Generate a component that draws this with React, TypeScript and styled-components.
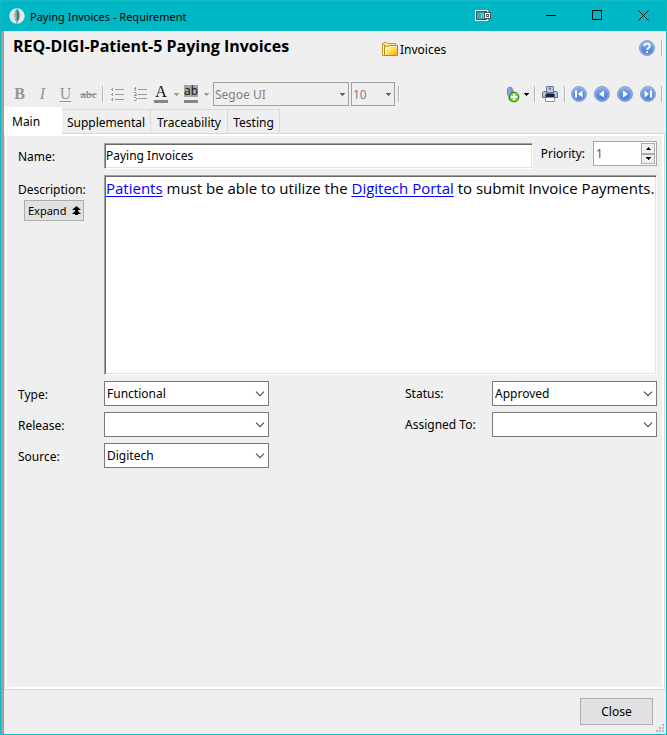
import React from "react";
import styled, { createGlobalStyle, css } from "styled-components";

const GlobalStyle = createGlobalStyle`
  *, *::before, *::after { box-sizing: border-box; }
  body { margin: 0; background: #efefef; }
  body, button, input, select { font-family: "Noto Sans", "Open Sans", sans-serif; font-size: 12px; color: #000; }
  button { padding: 0; }
`;

const Window = styled.div`
  min-height: 100vh;
  display: flex;
  flex-direction: column;
  border: 1px solid #12bac6;
  background: #efefef;
`;

const TitleBar = styled.header`
  height: 30px;
  padding: 0 0 0 8px;
  display: flex;
  align-items: center;
  background: #00b7c5;
`;

const WindowTitle = styled.span`
  flex: 1;
  padding-left: 5px;
  font-size: 11px;
  white-space: nowrap;
`;

const CaptionButton = styled.button<{ $wide?: boolean }>`
  width: ${(p) => (p.$wide ? 53 : 46)}px;
  height: 28px;
  margin-bottom: 2px;
  border: 0;
  background: none;
  display: flex;
  align-items: center;
  justify-content: ${(p) => (p.$wide ? "flex-start" : "center")};
`;

const Client = styled.div`
  flex: 1;
  display: flex;
  flex-direction: column;
  border-left: 3px solid #a09d9d;
  padding-right: 1px;
`;

const Heading = styled.div`
  height: 51px;
  padding: 4px 0 0 9px;
  display: grid;
  grid-template-columns: 369px 1fr auto;
  align-items: start;
`;

const Title = styled.h1`
  margin: 0;
  font-family: "Open Sans", sans-serif;
  font-size: 16px;
  line-height: 22px;
  font-weight: 700;
  white-space: nowrap;
`;

const FolderLink = styled.button`
  border: 0;
  background: none;
  height: 28px;
  display: flex;
  align-items: center;
  gap: 2px;
`;

const HelpArea = styled.div`
  display: flex;
  align-items: center;
  gap: 6px;
  height: 26px;
  padding-right: 2px;
`;

const Toolbar = styled.div`
  height: 24px;
  display: flex;
  align-items: center;
  justify-content: space-between;
  padding: 0 0 0 4px;
`;

const Group = styled.div`
  display: flex;
  align-items: center;
`;

const IconButton = styled.button<{ $w?: number }>`
  width: ${(p) => p.$w ?? 23}px;
  height: 24px;
  flex: none;
  border: 0;
  background: none;
  display: flex;
  align-items: center;
  justify-content: center;
`;

const Separator = styled.span<{ $gap?: number }>`
  width: 2px;
  height: 16px;
  margin: 0 ${(p) => p.$gap ?? 0}px;
  border-left: 1px solid #b4b4b4;
  border-right: 1px solid #fafafa;
`;

const Letter = styled.span<{ $kind: "b" | "i" | "u" | "s" }>`
  font-family: "Liberation Serif", serif;
  font-size: 16px;
  line-height: 18px;
  color: #959595;
  ${(p) => p.$kind === "b" && css`font-weight: 700;`}
  ${(p) => p.$kind === "i" && css`font-style: italic;`}
  ${(p) => p.$kind === "u" && css`text-decoration: underline; text-underline-offset: 2px;`}
  ${(p) => p.$kind === "s" && css`font-size: 11px; font-weight: 700; text-decoration: line-through;`}
`;

const Swatch = styled.span<{ $highlight?: boolean }>`
  width: 14px;
  height: 18px;
  border-bottom: 3px solid #858585;
  font: ${(p) => (p.$highlight ? '12px/12px "Open Sans", sans-serif' : '16px/14px "Liberation Serif", serif')};
  text-align: center;
  display: block;
  color: #111;
  background: ${(p) => (p.$highlight ? "linear-gradient(#a5a5a5 12px, #efefef 12px)" : "none")};
`;

const SelectFrame = styled.div<{ $tool?: boolean; $w?: number }>`
  display: grid;
  grid-template-columns: 1fr;
  align-items: center;
  width: ${(p) => (p.$w ? `${p.$w}px` : "100%")};
  height: ${(p) => (p.$tool ? 24 : 25)}px;
  border: 1px solid ${(p) => (p.$tool ? "#a0a0a0" : "#7a7a7a")};
  background: ${(p) => (p.$tool ? "#efefef" : "#fff")};
  > * { grid-area: 1 / 1; }
  > svg { justify-self: end; margin-right: 3px; pointer-events: none; }
  & + & { margin-left: 2px; }
`;

const Select = styled.select`
  appearance: none;
  width: 100%;
  height: 100%;
  border: 0;
  padding: 0 18px 0 2px;
  background: transparent;
  opacity: 1;
  &:disabled { color: #808080; opacity: 1; padding-left: 1px; }
`;

const Tabs = styled.div`
  display: flex;
  align-items: flex-end;
  height: 27px;
  padding-top: 1px;
`;

const Tab = styled.button<{ $active?: boolean; $w: number }>`
  flex: none;
  width: ${(p) => p.$w}px;
  height: 24px;
  border: solid #dadada;
  border-width: 1px 1px 0 0;
  padding-top: 2px;
  background: #efefef;
  white-space: nowrap;
  ${(p) => p.$active && css`
    position: relative;
    border-color: #fff;
    margin-bottom: -2px;
    height: 28px;
    padding: 0 0 1px 8px;
    background: #fff;
    text-align: left;
  `}
`;

const TabPage = styled.main`
  flex: 1;
  border: 1px solid #dadada;
  box-shadow: inset 0 0 0 2px #fff;
  padding: 6px 7px 8px 13px;
`;

const TopRow = styled.div`
  display: grid;
  grid-template-columns: 86px 1fr auto 64px;
  align-items: center;
  height: 32px;
`;

const Label = styled.label`
  font-size: 12px;
  line-height: 16px;
  padding-top: 2px;
  white-space: nowrap;
`;

const PriorityLabel = styled(Label)`
  padding: 0 8px 5px 8px;
`;

const inset = css`
  border: 1px solid;
  border-color: #a0a0a0 #fff #fff #a0a0a0;
  box-shadow: inset 1px 1px #696969, inset -1px -1px #e3e3e3;
  background: #fff;
`;

const NameInput = styled.input`
  ${inset}
  width: 100%;
  height: 26px;
  border-radius: 0;
  padding: 0 1px 2px;
  outline: 0;
`;

const Spinner = styled.div`
  display: flex;
  height: 25px;
  margin-bottom: 5px;
  border: 1px solid #a8a8a8;
  background: #fff;
  padding: 1px;
`;

const SpinInput = styled.input`
  flex: 1;
  min-width: 0;
  border: 0;
  padding: 0 1px;
  outline: 0;
  color: #9a4400;
`;

const SpinButtons = styled.div`
  width: 14px;
  display: grid;
  grid-template-rows: 1fr 1fr;
`;

const SpinButton = styled.button`
  border: 1px solid #ababab;
  background: #f0f0f0;
  display: flex;
  align-items: center;
  justify-content: center;
`;

const DescriptionRow = styled.div`
  display: grid;
  grid-template-columns: 86px 1fr;
  margin-top: 3px;
`;

const DescriptionSide = styled.div`
  display: flex;
  flex-direction: column;
  align-items: flex-start;
  gap: 2px;
  padding-top: 5px;
`;

const ExpandButton = styled.button`
  width: 60px;
  height: 21px;
  margin-left: 6px;
  border: 1px solid #adadad;
  background: #e1e1e1;
  display: flex;
  align-items: center;
  justify-content: space-between;
  padding: 0 2px 0 3px;
  font-size: 11px;
`;

const Description = styled.div`
  ${inset}
  height: 200px;
  padding: 1px 0 1px 1px;
  font-family: "Open Sans", sans-serif;
  font-size: 15px;
  line-height: 22px;
  outline: 0;
`;

const TextLink = styled.a`
  color: #00f;
  text-decoration: underline;
  text-underline-offset: 2px;
`;

const Fields = styled.div`
  display: grid;
  grid-template-columns: 86px minmax(100px, 165px) minmax(20px, 1fr) 87px minmax(100px, 165px);
  row-gap: 6px;
  align-items: center;
  margin-top: 6px;
`;

const RightLabel = styled(Label)`
  grid-column: 4;
  padding-top: 0;
`;

const Footer = styled.footer`
  height: 44px;
  display: flex;
  justify-content: flex-end;
  align-items: flex-start;
  padding: 8px 0 1px 0;
`;

const CloseButton = styled.button`
  width: 73px;
  height: 27px;
  border: 1px solid #adadad;
  background: #e1e1e1;
  font-size: 12px;
`;

const GripArea = styled.span`
  align-self: flex-end;
  display: flex;
  justify-content: flex-end;
  width: 12px;
  padding: 0 1px 1px 0;
`;

const Down = ({ color = "#606060" }: { color?: string }) => (
  <svg width="5" height="3" viewBox="0 0 5 3" shapeRendering="crispEdges"><path d="M0 0h5v1H4v1H3v1H2V2H1V1H0z" fill={color} /></svg>
);

const Chevron = () => (
  <svg width="10" height="6" viewBox="0 0 10 6"><path d="M1 .7l4 4 4-4" fill="none" stroke="#505050" strokeWidth="1.2" /></svg>
);

const AppIcon = () => (
  <svg width="16" height="16" viewBox="0 0 16 16">
    <circle cx="8" cy="8" r="7.7" fill="#dfe9e8" />
    <path d="M8 1C5 2.500 4.600 9.500 6.500 12.500h3C11.400 9.500 11 2.500 8 1z" fill="#6f9f9d" />
    <path d="M8.500 1.500c2 2 2.200 8 .5 11h-1z" fill="#3f7775" />
    <path d="M8 12v3.500" stroke="#4d7f7d" strokeWidth="1" />
    <path d="M6.500 4c-.6 2-.6 4 .1 7" stroke="#b4d0cd" fill="none" />
  </svg>
);

const Wallet = () => (
  <svg width="16" height="11" viewBox="0 0 16 11" shapeRendering="crispEdges">
    <path d="M0 0h13v11H0z" fill="#f3f3f3" />
    <path d="M1 1h11v9H1z" fill="#4a5362" />
    <path d="M2 2h8v7H2z" fill="#2fa9b4" />
    <path d="M6 3h1v5H6zM8 3h1v5H8z" fill="#a9c4c8" />
    <path d="M9 2h7v7H9z" fill="#4a5362" />
    <path d="M10 3h5v5h-5z" fill="#fff" />
    <path d="M11 4h3v3h-3z" fill="#4a5362" />
    <path d="M12 5h1v1h-1z" fill="#fff" />
  </svg>
);

const Folder = () => (
  <svg width="16" height="14" viewBox="0 0 16 14">
    <defs><linearGradient id="fold" x1="0" y1="0" x2="1" y2="1"><stop stopColor="#fff9cc" /><stop offset=".5" stopColor="#ffe156" /><stop offset="1" stopColor="#f5a81c" /></linearGradient></defs>
    <path d="M.5 12.500v-11L1.500.500h3l1 1h8v2" fill="#fff0a0" stroke="#c79522" />
    <path d="M.5 13.500V2.500h2v11z" fill="#fff7bd" stroke="#c79522" />
    <path d="M2.500 13.500V5.500l1-1.500h3l1-.5h8v10z" fill="url(#fold)" stroke="#b98324" />
    <path d="M3.500 12.500V6h3.500l1-1.500h6.500" fill="none" stroke="#fffbd0" />
  </svg>
);

const Ball = ({ children }: { children: React.ReactNode }) => (
  <svg width="16" height="16" viewBox="0 0 16 16">
    <defs><linearGradient id="ball" x1="0" y1="0" x2="0" y2="1"><stop stopColor="#8fb2ec" /><stop offset=".5" stopColor="#5f8fdf" /><stop offset="1" stopColor="#4a7ad8" /></linearGradient></defs>
    <circle cx="8" cy="8" r="7.500" fill="url(#ball)" stroke="#8f9fc0" />
    <circle cx="8" cy="8" r="6.500" fill="none" stroke="#aac5f4" strokeWidth=".6" />
    {children}
  </svg>
);

const Help = () => (
  <Ball><path d="M5.300 6.200C5.300 2.800 10.800 2.900 10.800 6c0 2-2.700 1.900-2.700 4M8.100 11.200v1.800" fill="none" stroke="#fff" strokeWidth="1.9" /></Ball>
);

const BulletList = () => (
  <svg width="13" height="13" viewBox="0 0 13 13" shapeRendering="crispEdges"><path d="M4 1h9v1H4zM4 6h9v1H4zM4 11h9v1H4zM0 1h2v1H0zM1 0h1v3H1zM0 6h2v1H0zM1 5h1v3H1zM0 11h2v1H0zM1 10h1v3H1z" fill="#999" /></svg>
);

const NumberList = () => (
  <svg width="13" height="14" viewBox="0 0 13 14" shapeRendering="crispEdges"><path d="M4 2h9v1H4zM4 7h9v1H4zM4 11h9v1H4zM1 0h1v4H1zM0 1h1v1H0zM0 5h2v1H0zM2 6h1v1H2zM1 7h1v1H1zM0 8h3v1H0zM0 10h2v1H0zM2 11h1v2H2zM0 13h2v1H0z" fill="#999" /></svg>
);

const AddNote = () => (
  <svg width="14" height="17" viewBox="0 0 14 17">
    <path d="M4 .8C1.200.8.500 4 1 7c.2 2 .8 3 1.500 3.500-.5 2 .5 4.500 2.500 5l3-7C8 4 6.500.8 4 .8z" fill="#6f8fd3" />
    <path d="M3.500 2v8" stroke="#91adea" strokeWidth="2" />
    <circle cx="8" cy="11" r="4.800" fill="#78e22b" stroke="#257016" />
    <path d="M8 7.800v6.400M4.800 11h6.400" stroke="#fff" strokeWidth="2" />
  </svg>
);

const Printer = () => (
  <svg width="16" height="16" viewBox="0 0 16 16">
    <path d="M4.500.500h7v6h-7z" fill="#bcc9e6" stroke="#66759f" />
    <path d="M7 2.500h2" stroke="#5a6fa6" strokeWidth="2" />
    <path d="M.5 6.500l1-1h3v2h7v-2h3l1 1v5h-3v-1h-9v1h-3z" fill="#b3c1e0" stroke="#606b8f" />
    <path d="M4 8h8v4H4z" fill="#1c2230" />
    <path d="M3.500 11.500h9v4h-9z" fill="#fff" stroke="#8292b8" />
    <path d="M3 8h1v4H3zM12 8h1v4h-1z" fill="#5b73b5" />
  </svg>
);

const DoubleUp = () => (
  <svg width="9" height="9" viewBox="0 0 9 9"><path d="M4.500 0L9 4H6v1l3 3H6v1H3V8H0l3-3V4H0z" fill="#000" /></svg>
);

const Grip = () => (
  <svg width="8" height="8" viewBox="0 0 8 8" shapeRendering="crispEdges"><path d="M6 0h2v2H6zM3 3h2v2H3zM6 3h2v2H6zM0 6h2v2H0zM3 6h2v2H3zM6 6h2v2H6z" fill="#b8b8b8" /></svg>
);

const navItems = [
  { name: "First", path: "M4 4.500h2v7H4zM11.500 4.500v7L7 8z" },
  { name: "Previous", path: "M10 4.500v7L5 8z" },
  { name: "Next", path: "M6 4.500v7L11 8z" },
  { name: "Last", path: "M10 4.500h2v7h-2zM4.500 4.500v7L9 8z" },
];

function Picker({ id, value }: { id: string; value: string }) {
  return (
    <SelectFrame>
      <Select id={id} defaultValue={value}><option>{value}</option></Select>
      <Chevron />
    </SelectFrame>
  );
}

export default function App() {
  return (
    <>
      <GlobalStyle />
      <Window>
        <TitleBar>
          <AppIcon />
          <WindowTitle>Paying Invoices - Requirement</WindowTitle>
          <CaptionButton $wide aria-label="Dock"><Wallet /></CaptionButton>
          <CaptionButton aria-label="Minimize">
            <svg width="10" height="10" viewBox="0 0 10 10"><path d="M0 5.500h10" stroke="#000" /></svg>
          </CaptionButton>
          <CaptionButton aria-label="Maximize">
            <svg width="10" height="10" viewBox="0 0 10 10"><path d="M.5.500h9v9h-9z" fill="none" stroke="#000" /></svg>
          </CaptionButton>
          <CaptionButton aria-label="Close window">
            <svg width="11" height="11" viewBox="0 0 11 11"><path d="M.5.500l10 10M10.500.500l-10 10" stroke="#000" /></svg>
          </CaptionButton>
        </TitleBar>
        <Client>
          <Heading>
            <Title>REQ-DIGI-Patient-5 Paying Invoices</Title>
            <FolderLink><Folder />Invoices</FolderLink>
            <HelpArea><IconButton $w={16} aria-label="Help"><Help /></IconButton><Separator /></HelpArea>
          </Heading>
          <Toolbar>
            <Group>
              <IconButton aria-label="Bold" disabled><Letter $kind="b">B</Letter></IconButton>
              <IconButton aria-label="Italic" disabled><Letter $kind="i">I</Letter></IconButton>
              <IconButton aria-label="Underline" disabled><Letter $kind="u">U</Letter></IconButton>
              <IconButton aria-label="Strikethrough" disabled><Letter $kind="s">abc</Letter></IconButton>
              <Separator $gap={2} />
              <IconButton aria-label="Bulleted list" disabled><BulletList /></IconButton>
              <IconButton aria-label="Numbered list" disabled><NumberList /></IconButton>
              <IconButton $w={18} aria-label="Text color" disabled><Swatch>A</Swatch></IconButton>
              <IconButton $w={12} aria-label="Text color options" disabled><Down color="#999" /></IconButton>
              <IconButton $w={18} aria-label="Highlight" disabled><Swatch $highlight>ab</Swatch></IconButton>
              <IconButton $w={13} aria-label="Highlight options" disabled><Down color="#999" /></IconButton>
              <SelectFrame $tool $w={136}>
                <Select aria-label="Font" disabled defaultValue="Segoe UI"><option>Segoe UI</option></Select>
                <Down />
              </SelectFrame>
              <SelectFrame $tool $w={44}>
                <Select aria-label="Font size" disabled defaultValue="10"><option>10</option></Select>
                <Down />
              </SelectFrame>
              <Separator $gap={3} />
            </Group>
            <Group>
              <IconButton $w={14} aria-label="Add"><AddNote /></IconButton>
              <IconButton $w={13} aria-label="Add options"><Down color="#000" /></IconButton>
              <Separator $gap={1} />
              <IconButton $w={26} aria-label="Print"><Printer /></IconButton>
              <Separator $gap={1} />
              {navItems.map((item) => (
                <IconButton key={item.name} aria-label={item.name}><Ball><path d={item.path} fill="#fff" /></Ball></IconButton>
              ))}
              <Separator $gap={2} />
            </Group>
          </Toolbar>
          <Tabs role="tablist">
            <Tab $active $w={58} role="tab" aria-selected="true">Main</Tab>
            <Tab $w={89} role="tab">Supplemental</Tab>
            <Tab $w={77} role="tab">Traceability</Tab>
            <Tab $w={52} role="tab">Testing</Tab>
          </Tabs>
          <TabPage>
            <TopRow>
              <Label htmlFor="name">Name:</Label>
              <NameInput id="name" defaultValue="Paying Invoices" />
              <PriorityLabel htmlFor="priority">Priority:</PriorityLabel>
              <Spinner>
                <SpinInput id="priority" defaultValue="1" />
                <SpinButtons>
                  <SpinButton aria-label="Increase"><svg width="5" height="3" viewBox="0 0 5 3"><path d="M0 3h5L2.500 0z" /></svg></SpinButton>
                  <SpinButton aria-label="Decrease"><Down color="#000" /></SpinButton>
                </SpinButtons>
              </Spinner>
            </TopRow>
            <DescriptionRow>
              <DescriptionSide>
                <Label id="description-label">Description:</Label>
                <ExpandButton>Expand<DoubleUp /></ExpandButton>
              </DescriptionSide>
              <Description role="textbox" aria-multiline="true" aria-labelledby="description-label" contentEditable suppressContentEditableWarning>
                <TextLink href="#patients">Patients</TextLink> must be able to utilize the <TextLink href="#portal">Digitech Portal</TextLink> to submit Invoice Payments.
              </Description>
            </DescriptionRow>
            <Fields>
              <Label htmlFor="type">Type:</Label><Picker id="type" value="Functional" />
              <RightLabel htmlFor="status">Status:</RightLabel><Picker id="status" value="Approved" />
              <Label htmlFor="release">Release:</Label><Picker id="release" value="" />
              <RightLabel htmlFor="assigned">Assigned To:</RightLabel><Picker id="assigned" value="" />
              <Label htmlFor="source">Source:</Label><Picker id="source" value="Digitech" />
            </Fields>
          </TabPage>
          <Footer>
            <CloseButton>Close</CloseButton>
            <GripArea><Grip /></GripArea>
          </Footer>
        </Client>
      </Window>
    </>
  );
}
